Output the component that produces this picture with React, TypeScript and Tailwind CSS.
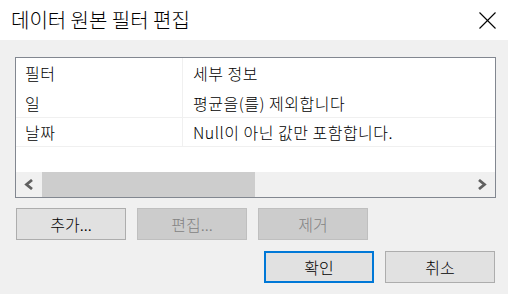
import React from 'react'

const font = { fontFamily: '"Noto Sans CJK KR", "Noto Sans", sans-serif' }

const rows = [
  { name: '일', detail: '평균을(를) 제외합니다' },
  { name: '날짜', detail: 'Null이 아닌 값만 포함합니다.' },
]

function Chevron({ dir }: { dir: 'left' | 'right' }) {
  return (
    <svg width="10" height="11" viewBox="0 0 10 11" fill="none">
      <polyline
        points={dir === 'left' ? '8,1 2.5,5.5 8,10' : '2,1 7.5,5.5 2,10'}
        stroke="#606060"
        strokeWidth="2.8"
      />
    </svg>
  )
}

function Button({
  label,
  disabled,
  primary,
}: {
  label: string
  disabled?: boolean
  primary?: boolean
}) {
  const base = 'h-[32px] w-[110px] flex items-center justify-center text-[16px] leading-none font-light'
  if (disabled)
    return <div className={`${base} bg-[#cccccc] border border-[#bfbfbf] text-[#838383]`}>{label}</div>
  if (primary)
    return <div className={`${base} bg-[#e1e1e1] border-2 border-[#0078d7] text-black`}>{label}</div>
  return <div className={`${base} bg-[#e1e1e1] border border-[#adadad] text-black`}>{label}</div>
}

export default function App() {
  return (
    <div className="w-[508px] h-[294px] flex flex-col bg-[#f0f0f0]" style={font}>
      {/* Title bar */}
      <div className="h-10 bg-white flex items-center justify-between pl-[11px] pr-[12px]">
        <span className="text-[20px] text-black leading-none font-light">데이터 원본 필터 편집</span>
        <svg width="17" height="17" viewBox="0 0 17 17">
          <line x1="0.5" y1="0.5" x2="16.5" y2="16.5" stroke="#000" strokeWidth="1.1" />
          <line x1="16.5" y1="0.5" x2="0.5" y2="16.5" stroke="#000" strokeWidth="1.1" />
        </svg>
      </div>

      <div className="flex-1 flex flex-col pt-[17px] pl-[15px] pr-[12px]">
        {/* Filter list */}
        <div className="h-[141px] border border-[#828790] bg-white flex flex-col text-[16px] font-light tracking-[0.5px] text-black">
          <div className="h-[30px] flex">
            <div className="w-[167px] border-r border-[#f0f0f0] pl-[9px] flex items-center">필터</div>
            <div className="flex-1 pl-[10px] flex items-center">세부 정보</div>
          </div>
          {rows.map((r, i) => (
            <div
              key={r.name}
              className={`${i === 0 ? 'h-[30px]' : 'h-[29px]'} flex border-b border-[#f0f0f0]`}
            >
              <div className="w-[167px] border-r border-[#f0f0f0] pl-[9px] flex items-center">{r.name}</div>
              <div className="flex-1 pl-[10px] flex items-center">{r.detail}</div>
            </div>
          ))}
          <div className="flex-1" />
          {/* Horizontal scrollbar */}
          <div className="h-[25px] flex bg-[#f0f0f0]">
            <div className="w-[26px] flex items-center justify-center">
              <Chevron dir="left" />
            </div>
            <div className="flex-1 flex">
              <div className="w-[213px] bg-[#cdcdcd]" />
            </div>
            <div className="w-[26px] flex items-center justify-center">
              <Chevron dir="right" />
            </div>
          </div>
        </div>

        {/* Action buttons */}
        <div className="flex gap-[11px] mt-[10px] ml-px">
          <Button label="추가..." />
          <Button label="편집..." disabled />
          <Button label="제거" disabled />
        </div>

        <div className="flex gap-[11px] mt-[11px] justify-end mr-px">
          <Button label="확인" primary />
          <Button label="취소" />
        </div>
      </div>
    </div>
  )
}
